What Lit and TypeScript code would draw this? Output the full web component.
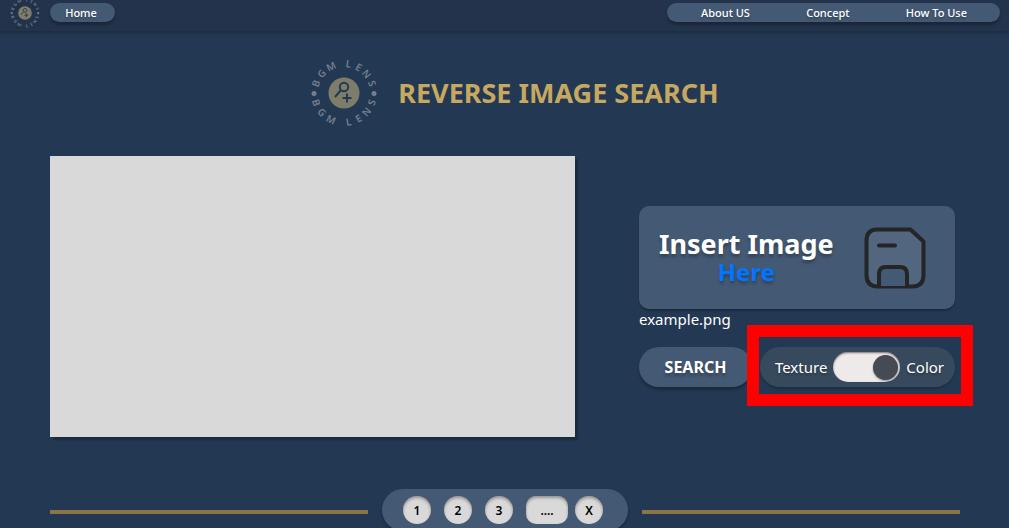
import { LitElement, html, svg, css } from "lit";
import { customElement, state } from "lit/decorators.js";

const RING: Array<[string, number]> = [
  ["B", -71], ["G", -49], ["M", -26], ["L", 9], ["E", 30], ["N", 50], ["S", 71],
];

@customElement("lens-logo")
class LensLogo extends LitElement {
  static styles = css`
    :host { display: block; }
    svg { display: block; width: 100%; height: 100%; }
    .letter {
      font: 600 10px "Noto Sans", sans-serif;
      text-anchor: middle;
      fill: #747e90;
    }
    .dot { fill: #747e90; }
    .disc { fill: #7e7d69; }
    .mark { fill: none; stroke: #233a55; stroke-width: 2; }
  `;

  render() {
    return html`<svg viewBox="-34 -34 68 68" role="img" aria-label="BGM Lens">
      ${RING.map(([c, a]) => svg`<text class="letter" y="-26" transform=${`rotate(${a})`}>${c}</text>`)}
      ${RING.map(([c, a]) => svg`<text class="letter" y="33" transform=${`rotate(${-a})`}>${c}</text>`)}
      <circle class="dot" cx="-30" cy="0.5" r="2.5" />
      <circle class="dot" cx="30" cy="0.5" r="2.5" />
      <circle class="disc" cx="0" cy="0" r="15.5" />
      <circle class="mark" cx="0" cy="-6" r="4.2" />
      <path class="mark" d="M-3 -3 L-9 4 M3 0.5 V9.5 M-1.5 5 H7.5" />
    </svg>`;
  }
}

@customElement("app-root")
class AppRoot extends LitElement {
  @state() private byColor = true;

  static styles = css`
    :host {
      display: flex;
      flex-direction: column;
      height: 100vh;
      overflow: hidden;
      background: #233953;
      color: #fff;
      font-family: "Noto Sans", sans-serif;
    }
    * { box-sizing: border-box; }
    a { color: inherit; text-decoration: none; }
    button { border: 0; padding: 0; color: inherit; font-family: inherit; cursor: pointer; }

    .bar {
      flex: none;
      display: flex;
      align-items: flex-start;
      height: 31px;
      padding: 0 9px 0 10px;
      background: #22334b;
      box-shadow: 0 2px 4px rgba(0, 0, 0, 0.25);
      font-size: 11px;
      font-weight: 500;
      line-height: 19px;
      text-shadow: 0 2px 2px rgba(0, 0, 0, 0.25);
    }
    .bar-logo { width: 30px; height: 30px; margin-top: -2px; }
    .pill {
      margin-top: 3px;
      border-radius: 10px;
      background: #445973;
      box-shadow: 0 3px 3px rgba(0, 0, 0, 0.25);
    }
    .home { margin-left: 10px; width: 65px; padding-right: 3px; text-align: center; }
    .links {
      display: flex;
      justify-content: space-between;
      width: 333px;
      margin-left: auto;
      padding: 0 33px 0 34px;
    }

    .title {
      flex: none;
      display: flex;
      justify-content: center;
      align-items: center;
      gap: 20px;
      margin-top: 28px;
      padding-left: 20px;
    }
    .title-logo { width: 68px; height: 68px; }
    h1 {
      margin: 0;
      color: #c6a860;
      font-size: 27px;
      font-weight: 700;
      line-height: 36px;
    }

    .main {
      flex: none;
      display: flex;
      align-items: center;
      gap: 64px;
      margin-top: 29px;
      padding: 0 54px 0 50px;
    }
    .preview {
      flex: 1;
      height: 281px;
      background: #d9d9d9;
      box-shadow: 3px 3px 2px rgba(0, 0, 0, 0.25);
    }
    .side { flex: none; width: 316px; }
    .drop {
      display: flex;
      align-items: center;
      justify-content: space-between;
      width: 100%;
      height: 103px;
      padding: 0 29px 0 20px;
      border-radius: 10px;
      background: #445973;
      box-shadow: 0 2px 2px rgba(0, 0, 0, 0.25);
      font-size: 27px;
      font-weight: 700;
      line-height: 28px;
      text-shadow: 0 3px 3px rgba(0, 0, 0, 0.25);
    }
    .here { display: block; color: #0075ff; font-size: 24px; }
    .disk { width: 62px; height: 62px; }
    .file { margin: 0; font-size: 15px; line-height: 20px; }
    .actions { display: flex; gap: 8px; margin-top: 18px; }
    .search {
      width: 113px;
      height: 40px;
      border-radius: 20px;
      background: #445973;
      box-shadow: 0 3px 3px rgba(0, 0, 0, 0.25);
      font-size: 16px;
      font-weight: 700;
      text-shadow: 0 3px 3px rgba(0, 0, 0, 0.25);
    }
    .mode {
      position: relative;
      flex: 1;
      display: flex;
      align-items: center;
      justify-content: center;
      gap: 6px;
      height: 40px;
      padding-left: 4px;
      border-radius: 20px;
      background: #37495c;
      box-shadow: 0 2px 2px rgba(0, 0, 0, 0.2);
      font-size: 15px;
      text-shadow: 0 2px 2px rgba(0, 0, 0, 0.25);
    }
    .mode::after {
      content: "";
      position: absolute;
      inset: -22px -18px -19px -13px;
      border: 12px solid #f00;
      pointer-events: none;
    }
    .switch {
      appearance: none;
      display: flex;
      align-items: center;
      width: 67px;
      height: 30px;
      margin: 0;
      padding: 0 2px;
      border-radius: 15px;
      background: #eeeaea;
      box-shadow: inset 0 1px 2px rgba(60, 30, 30, 0.6);
      cursor: pointer;
    }
    .switch::before {
      content: "";
      width: 25px;
      height: 25px;
      border-radius: 50%;
      background: #444b54;
      box-shadow: 0 1px 2px rgba(0, 0, 0, 0.4);
    }
    .switch:checked { justify-content: flex-end; }

    .foot {
      flex: none;
      display: flex;
      align-items: flex-start;
      gap: 14px;
      margin-top: 52px;
      padding: 0 49px 0 50px;
    }
    .rule { flex: 1; height: 4px; margin: 21px 0 0; border: 0; background: #8b7547; }
    .pages {
      display: flex;
      justify-content: center;
      align-items: center;
      gap: 13px;
      width: 246px;
      height: 42px;
      padding-right: 4px;
      border-radius: 21px;
      background: #445973;
      box-shadow: 0 3px 3px rgba(0, 0, 0, 0.25);
    }
    .page {
      width: 28px;
      height: 28px;
      border-radius: 14px;
      background: #d9d9d9;
      box-shadow: inset 0 2px 3px rgba(60, 40, 40, 0.4);
      color: #000;
      font-size: 12px;
      font-weight: 600;
    }
    .more { width: 42px; border-radius: 10px; }
    .last { margin-left: -6px; }
  `;

  render() {
    return html`
      <header class="bar">
        <lens-logo class="bar-logo"></lens-logo>
        <a class="pill home" href="#home">Home</a>
        <nav class="pill links">
          <a href="#about">About US</a>
          <a href="#concept">Concept</a>
          <a href="#how">How To Use</a>
        </nav>
      </header>
      <div class="title">
        <lens-logo class="title-logo"></lens-logo>
        <h1>REVERSE IMAGE SEARCH</h1>
      </div>
      <main class="main">
        <div class="preview"></div>
        <div class="side">
          <button class="drop">
            <span>Insert Image<span class="here">Here</span></span>
            <svg class="disk" viewBox="0 0 62 62" fill="none" stroke="#242526" stroke-width="4" stroke-linecap="round" stroke-linejoin="round" aria-hidden="true">
              <path fill="#52667f" d="M13 2.5 H46.5 L59.5 14.5 V48 Q59.5 59.5 48 59.5 H14 Q2.5 59.5 2.5 48 V14 Q2.5 2.5 13 2.5 Z" />
              <path fill="#445973" d="M15 59 V47 Q15 40 22 40 H36 Q43 40 43 47 V59" />
              <path d="M15 18.500 H31" />
            </svg>
          </button>
          <p class="file">example.png</p>
          <div class="actions">
            <button class="search">SEARCH</button>
            <div class="mode">
              <label for="mode">Texture</label>
              <input id="mode" class="switch" type="checkbox" role="switch"
                .checked=${this.byColor}
                @change=${(e: Event) => (this.byColor = (e.target as HTMLInputElement).checked)} />
              <label for="mode">Color</label>
            </div>
          </div>
        </div>
      </main>
      <footer class="foot">
        <hr class="rule" />
        <nav class="pages" aria-label="Pages">
          <button class="page">1</button>
          <button class="page">2</button>
          <button class="page">3</button>
          <button class="page more">....</button>
          <button class="page last">X</button>
        </nav>
        <hr class="rule" />
      </footer>
    `;
  }
}
